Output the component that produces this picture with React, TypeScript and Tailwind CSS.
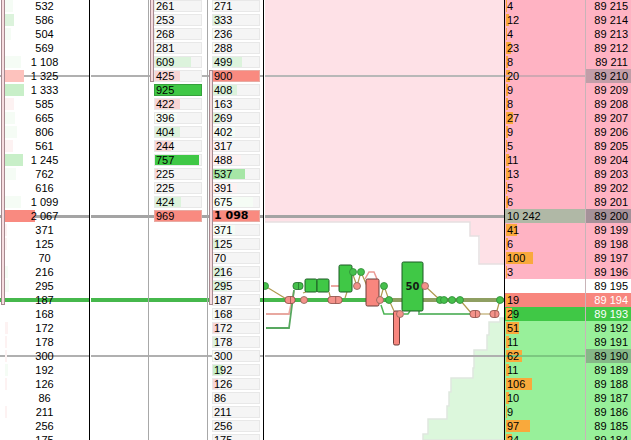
const g1 = 'bg-[#f5fcf5]';
const g2 = 'bg-[#dcf3dc]';
const g3 = 'bg-[#c8efc8]';
const g4 = 'bg-[#a6e6a6]';
const r1 = 'bg-[#fdf2f2]';
const r2 = 'bg-[#f9d5d5]';
const r3 = 'bg-[#fdc2bd]';
const r4 = 'bg-[#f98a80]';

type Bar = [string, number?, string?];

const leftRows: Bar[] = [
  ['532', 8, g1], ['586', 9, g2], ['504', 6, g1], ['569'], ['1 108', 16, g1], ['1 325', 19, r3], ['1 333', 19, g3],
  ['585', 9, r1], ['665', 10, g1], ['806', 12, g1], ['561', 8, r1], ['1 245', 18, g3], ['762', 11, g1], ['616'],
  ['1 099', 16, g1], ['2 067', 30, r4], ['371', 2, r1], ['125', 2, r1], ['70'], ['216', 3, g1], ['295', 4, g1],
  ['187'], ['168'], ['172', 3, r1], ['178', 2, r1], ['300', 2, r1], ['192', 3, g1], ['126', 2, r1], ['86'],
  ['211', 2, r1], ['256'], ['175'],
];

const sellRows: Bar[] = [
  ['261', 4, g1], ['253', 2, g1], ['268', 2, g1], ['281', 2, g1], ['609', 36, g2], ['425', 25, r2], ['925', 48, 'bg-[#40c846]'],
  ['422', 25, r2], ['396', 22, g1], ['404', 25, g2], ['244', 16, r2], ['757', 44, 'bg-[#40c846]'], ['225', 3, r2], ['225'],
  ['424', 26, g2], ['969', 48, r4],
];

const buyRows: Bar[] = [
  ['271', 4, g1], ['333', 8, g2], ['236', 2, g1], ['288', 2, g1], ['499', 29, g2], ['900', 48, r4], ['408', 24, g2],
  ['163', 2, g1], ['269', 8, g2], ['402', 22, g1], ['317', 14, r1], ['488', 28, r1], ['537', 32, g4], ['391', 24, r1],
  ['675', 40, g1], ['1 098', 48, r4], ['371', 22, g1], ['125', 6, g2], ['70'], ['216', 10, g2], ['295', 14, g2], ['187'],
  ['168', 2, g1], ['172', 6, r2], ['178', 4, g2], ['300', 2, g1], ['192', 10, g3], ['126', 5, r2], ['86'], ['211'], ['256'], ['175'],
];

const orderRows: [string, number][] = [
  ['4', 1], ['12', 3], ['4', 1], ['23', 5], ['8', 2], ['20', 4], ['9', 2], ['8', 2], ['27', 7], ['9', 2], ['5', 1], ['11', 3],
  ['13', 3], ['5', 1], ['6', 2], ['10 242', 0], ['41', 11], ['6', 2], ['100', 27], ['3', 1], ['', 0], ['19', 4], ['29', 6],
  ['51', 13], ['11', 3], ['62', 16], ['11', 3], ['106', 26], ['10', 3], ['9', 1], ['97', 24], ['24', 6],
];

function orderBg(i: number) {
  if (i === 15) return 'bg-[#b0b8a6]';
  if (i === 20) return 'bg-white';
  if (i === 21) return 'bg-[#f8867e]';
  if (i === 22) return 'bg-[#40c846]';
  return i < 20 ? 'bg-[#ffb3c3]' : 'bg-[#98f09a]';
}

function priceBg(i: number) {
  if (i === 5) return 'bg-[#c29ea8]';
  if (i === 15) return 'bg-[#a59199]';
  if (i === 25) return 'bg-[#86b888]';
  return orderBg(i);
}

function Guides({ inset = '' }: { inset?: string }) {
  return (
    <>
      <div className={`absolute right-0 top-[75px] h-[2px] bg-[#b0b0b0] ${inset}`} />
      <div className={`absolute right-0 top-[215px] h-[3px] bg-[#a4a4a4] ${inset}`} />
      <div className={`absolute right-0 top-[298px] h-[4px] bg-[#46b84c] ${inset}`} />
      <div className={`absolute right-0 top-[355px] h-[2px] bg-[#b0b0b0] ${inset}`} />
    </>
  );
}

function Bracket({ className }: { className: string }) {
  return <div className={`absolute z-20 w-[4px] border border-[#a78a90] bg-[#f6dde0] ${className}`} />;
}

function Cell({ row, bold }: { row?: Bar; bold?: boolean }) {
  if (!row) return <div className="h-[14px]" />;
  const [text, width, color] = row;
  let border = 'border-[#e8e8e8]';
  if (text === '925') border = 'border-[#36a03c]';
  else if (width === 48) border = 'border-[#e8aaa2]';
  return (
    <div className="h-[14px] py-px">
      <div className={`relative h-[12px] w-[48px] overflow-hidden border bg-[#f5f5f5] ${border}`}>
        {width ? <div className={`absolute inset-y-0 left-0 ${color}`} style={{ width }} /> : null}
        <span className={`relative block pl-px text-[11px] leading-[10px] ${bold ? "font-['DejaVu_Sans'] text-[10px] font-bold" : ''}`}>{text}</span>
      </div>
    </div>
  );
}

function Dot({ x, y, red }: { x: number; y: number; red?: boolean }) {
  return <circle cx={x} cy={y} r={3.5} fill={red ? '#f4928a' : '#46c04c'} stroke={red ? '#8a6258' : '#2f8a36'} strokeWidth={0.8} />;
}

// two or more overlapping markers at the same price, with a seam between them
function Pill({ x, y, w, red }: { x: number; y: number; w: number; red?: boolean }) {
  const stroke = red ? '#8a4a44' : '#206a28';
  return (
    <g>
      <rect x={x} y={y - 3.5} width={w} height={7} rx={3} fill={red ? '#f4928a' : '#46c04c'} stroke={stroke} strokeWidth={0.8} />
      <path d={`M${x + w * 0.55} ${y - 3.5}V${y + 3.5}`} stroke={stroke} strokeWidth={0.7} />
    </g>
  );
}

function Box({ x, y, w, h, red }: { x: number; y: number; w: number; h: number; red?: boolean }) {
  return <rect x={x} y={y} width={w} height={h} rx={1.5} fill={red ? '#f8867e' : '#40c846'} stroke={red ? '#6a3c38' : '#1c5a24'} strokeWidth={1} />;
}

// coordinates are page pixels, the svg viewBox starts at the chart's left edge
function Chart() {
  return (
    <svg width={240} height={440} viewBox="264 0 240 440" className="block">
      <path d="M265 0H504V264H480V236H470V222H265Z" fill="#fee1e7" />
      <path d="M265 222H470V236H479V264H504" fill="none" stroke="#e6dfe1" strokeWidth={1.5} />
      <path d="M504 318H500V322H489V335H487V350H474V368H473V378H451V392H449V406H447V419H428V434H423V440H504Z" fill="#dcf7dc" stroke="#dfe8df" strokeWidth={1.5} />
      <rect x={265} y={75} width={239} height={2} fill="#b8b8b8" />
      <rect x={265} y={215} width={239} height={3} fill="#a4a4a4" />
      <rect x={265} y={355} width={239} height={2} fill="#b0b0b0" />
      <rect x={264} y={298} width={126} height={4} fill="#46b84c" />
      <rect x={390} y={298} width={114} height={4} fill="#8f9f62" />

      <path d="M266 314H289L294 291" fill="none" stroke="#e8a8a0" strokeWidth={1.8} />
      <path d="M266 328H289L294 290" fill="none" stroke="#58a860" strokeWidth={1.8} />
      <path d="M331 286H339" stroke="#eba8a2" strokeWidth={2} />
      <path d="M365 279L369 272H374L377 279" fill="none" stroke="#eb9a94" strokeWidth={1.5} />
      <path d="M381 305L384 314H393" fill="none" stroke="#4cb454" strokeWidth={1.5} />
      <path d="M419 311V314H470" fill="none" stroke="#6cbc74" strokeWidth={1.8} />
      <path d="M410 311L408 314H404" fill="none" stroke="#4cb454" strokeWidth={1.5} />
      <path d="M265 286L288 300M303 293L306 292M329 292L331 300M347 292L345 298M352 272L357 286L361 272L367 286M380 300L384 286L389 300L394 311M425 286L440 300M460 300L472 314M480 314H490M496 314L500 300" fill="none" stroke="#b09a50" strokeWidth={1.2} />

      <Dot x={265} y={286} />
      <Pill x={285} y={300} w={10} red />
      <Pill x={293} y={286} w={10} />
      <Box x={305} y={279} w={12} h={13} />
      <Box x={317} y={279} w={12} h={13} />
      <Dot x={304} y={300} red />
      <Pill x={328} y={300} w={14} red />
      <Box x={339} y={265} w={13} h={27} />
      <Dot x={353} y={272} />
      <Dot x={361} y={272} />
      <Dot x={357} y={286} red />
      <Box x={366} y={279} w={13} h={27} red />
      <Dot x={380} y={300} red />
      <Dot x={384} y={286} />
      <Dot x={389} y={300} />
      <Box x={393.5} y={311} w={6} h={34} red />
      <Dot x={400} y={314} red />
      <Box x={402} y={262} w={21} h={49} />
      <text x={412.5} y={290} textAnchor="middle" className="font-['DejaVu_Sans'] text-[10px] font-bold" fill="#141a14">50</text>
      <Dot x={425} y={286} red />
      <Dot x={440} y={300} />
      <Dot x={444} y={300} />
      <Dot x={452} y={300} />
      <Dot x={460} y={300} />
      <Pill x={470} y={314} w={10} red />
      <Pill x={490} y={314} w={9} red />
      <Dot x={500} y={300} />
    </svg>
  );
}

export default function App() {
  return (
    <div className="flex h-[440px] w-[631px] overflow-hidden bg-white font-['Liberation_Sans',sans-serif] text-[11px] leading-[14px] text-black">
      <div className="relative w-[90px] shrink-0 border-r border-black">
        <Guides inset="left-0" />
        <Bracket className="left-[1px] -top-px h-[306px]" />
        <div className="relative z-10 -mt-px">
          {leftRows.map(([text, width, color], i) => (
            <div key={i} className="relative h-[14px] text-center">
              {width ? <div className={`absolute left-[5px] top-px h-[12px] ${color}`} style={{ width }} /> : null}
              <span className="relative">{text}</span>
            </div>
          ))}
        </div>
      </div>

      <div className="relative w-[59px] shrink-0 border-r border-[#a8a8a8]">
        <Guides inset="left-[1px]" />
      </div>

      <div className="relative w-[59px] shrink-0 border-r border-[#a8a8a8]">
        <Guides inset="left-0" />
        <Bracket className="left-[1px] -top-px h-[83px]" />
        <div className="relative z-10 -mt-px pl-[5px]">
          {sellRows.map((row, i) => (
            <Cell key={i} row={row} />
          ))}
        </div>
      </div>

      <div className="relative w-[56px] shrink-0 border-r border-black">
        <Guides inset="left-0" />
        <Bracket className="left-[1px] top-[70px] h-[235px]" />
        <div className="relative z-10 -mt-px pl-[4px]">
          {buyRows.map((row, i) => (
            <Cell key={i} row={row} bold={row[0] === '1 098'} />
          ))}
        </div>
      </div>

      <div className="w-[241px] shrink-0 border-r border-black">
        <Chart />
      </div>

      <div className="w-[81px] shrink-0 border-r border-[#c8b4b8]">
        <div className="-mt-px">
          {orderRows.map(([text, width], i) => (
            <div key={i} className={`relative h-[14px] pl-[2px] ${orderBg(i)}`}>
              {width ? <div className="absolute left-px top-px h-[12px] bg-[#f9a93c]" style={{ width }} /> : null}
              {i === 5 ? <div className="absolute inset-x-0 top-[6px] h-[2px] bg-[#d0a8b2]" /> : null}
              {i === 25 ? <div className="absolute inset-x-0 top-[6px] h-[2px] bg-[#7cc880]" /> : null}
              <span className="relative">{text}</span>
            </div>
          ))}
        </div>
      </div>

      <div className="flex-1">
        <div className="-mt-px">
          {orderRows.map((_, i) => (
            <div key={i} className={`h-[14px] pr-[3px] text-right ${priceBg(i)} ${i === 21 || i === 22 ? 'text-white' : ''}`}>
              89 {215 - i}
            </div>
          ))}
        </div>
      </div>
    </div>
  );
}
